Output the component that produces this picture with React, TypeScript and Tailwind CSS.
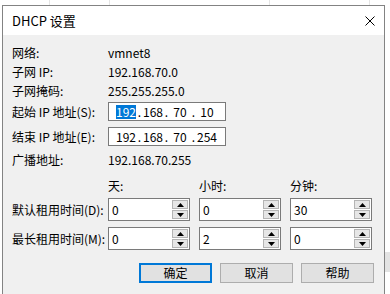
import React from "react";

function Tri({ up }: { up: boolean }) {
  return (
    <svg width="7" height="4" viewBox="0 0 7 4">
      {up ? <polygon points="0,4 7,4 3.5,0" fill="#000" /> : <polygon points="0,0 7,0 3.5,4" fill="#000" />}
    </svg>
  );
}

function Spin({ v }: { v: string }) {
  return (
    <div className="w-[82px] h-[23px] flex bg-white border border-[#7a7a7a]">
      <div className="flex-1 pl-[3px] flex items-center leading-none">{v}</div>
      <div className="w-[17px] flex flex-col gap-[1px] py-[1px] pr-[1px]">
        <div className="flex-1 bg-[#e6e6e6] border border-[#b4b4b4] flex items-center justify-center">
          <Tri up />
        </div>
        <div className="flex-1 bg-[#e6e6e6] border border-[#b4b4b4] flex items-center justify-center">
          <Tri up={false} />
        </div>
      </div>
    </div>
  );
}

function IpBox({ parts, highlight }: { parts: string[]; highlight?: boolean }) {
  return (
    <div className="w-[118px] h-[19px] bg-white border border-[#7a7a7a] flex items-center pl-[6px] leading-none">
      {parts.map((p, i) => (
        <React.Fragment key={i}>
          <div className="w-[22px] flex justify-center">
            {i === 0 && highlight ? (
              <span className="bg-[#0078d7] text-white py-[1px]">{p}</span>
            ) : (
              <span>{p}</span>
            )}
          </div>
          {i < 3 && <div className="w-[5px] flex justify-center">.</div>}
        </React.Fragment>
      ))}
    </div>
  );
}

function Row({ label, children, h = "h-[19px]", mt = "" }: { label: string; children: React.ReactNode; h?: string; mt?: string }) {
  return (
    <div className={`flex items-center ${h} ${mt}`}>
      <div className="w-[96px] leading-none">{label}</div>
      {children}
    </div>
  );
}

export default function App() {
  return (
    <div className="w-[390px] h-[294px] bg-white overflow-hidden font-['Noto_Sans_CJK_SC','Microsoft_YaHei',sans-serif] text-[12px] text-black">
      <div className="flex h-[5px]">
        <div className="w-[50px] border-r border-[#e5e5e5]" />
        <div className="w-[60px] border-r border-[#e5e5e5]" />
        <div className="w-[160px] border-r border-[#e5e5e5]" />
        <div className="w-[100px] border-r border-[#e5e5e5]" />
      </div>
      <div className="flex">
        <div className="w-[2px]" />
        <div className="w-[383px] h-[289px] border-l border-t border-r border-[#838383] bg-[#f0f0f0] flex flex-col">
          <div className="h-[29px] bg-white flex items-center justify-between px-[9px]">
            <span className="text-[13px] leading-none">DHCP 设置</span>
            <svg width="10" height="10" viewBox="0 0 10 10">
              <path d="M0.5 0.5 L9.5 9.5 M9.5 0.5 L0.5 9.5" stroke="#000" strokeWidth="1" />
            </svg>
          </div>
          <div className="flex flex-col pl-[9px] pt-[8px]">
            <Row label="网络:">
              <span className="leading-none">vmnet8</span>
            </Row>
            <Row label="子网 IP:">
              <span className="leading-none">192.168.70.0</span>
            </Row>
            <Row label="子网掩码:">
              <span className="leading-none">255.255.255.0</span>
            </Row>
            <Row label="起始 IP 地址(S):" mt="mt-[2px]">
              <IpBox parts={["192", "168", "70", "10"]} highlight />
            </Row>
            <Row label="结束 IP 地址(E):" mt="mt-[6px]">
              <IpBox parts={["192", "168", "70", "254"]} />
            </Row>
            <Row label="广播地址:" mt="mt-[4px]">
              <span className="leading-none">192.168.70.255</span>
            </Row>
            <div className="flex items-center h-[19px] mt-[7px]">
              <div className="w-[96px]" />
              <div className="flex gap-[9px] leading-none">
                <div className="w-[82px]">天:</div>
                <div className="w-[82px]">小时:</div>
                <div className="w-[82px]">分钟:</div>
              </div>
            </div>
            <Row label="默认租用时间(D):" h="h-[23px]" mt="mt-[3px]">
              <div className="flex gap-[9px]">
                <Spin v="0" />
                <Spin v="0" />
                <Spin v="30" />
              </div>
            </Row>
            <Row label="最长租用时间(M):" h="h-[23px]" mt="mt-[6px]">
              <div className="flex gap-[9px]">
                <Spin v="0" />
                <Spin v="2" />
                <Spin v="0" />
              </div>
            </Row>
            <div className="flex justify-end gap-[8px] pr-[10px] mt-[13px]">
              <button className="w-[73px] h-[20px] bg-[#e1e1e1] border-2 border-[#0078d7] flex items-center justify-center leading-none">确定</button>
              <button className="w-[73px] h-[20px] bg-[#e1e1e1] border border-[#adadad] flex items-center justify-center leading-none">取消</button>
              <button className="w-[73px] h-[20px] bg-[#e1e1e1] border border-[#adadad] flex items-center justify-center leading-none">帮助</button>
            </div>
          </div>
        </div>
        <div className="flex-1 flex flex-col">
          <div className="h-[247px]" />
          <div className="h-[20px] bg-[#e3e3e3]" />
        </div>
      </div>
    </div>
  );
}
